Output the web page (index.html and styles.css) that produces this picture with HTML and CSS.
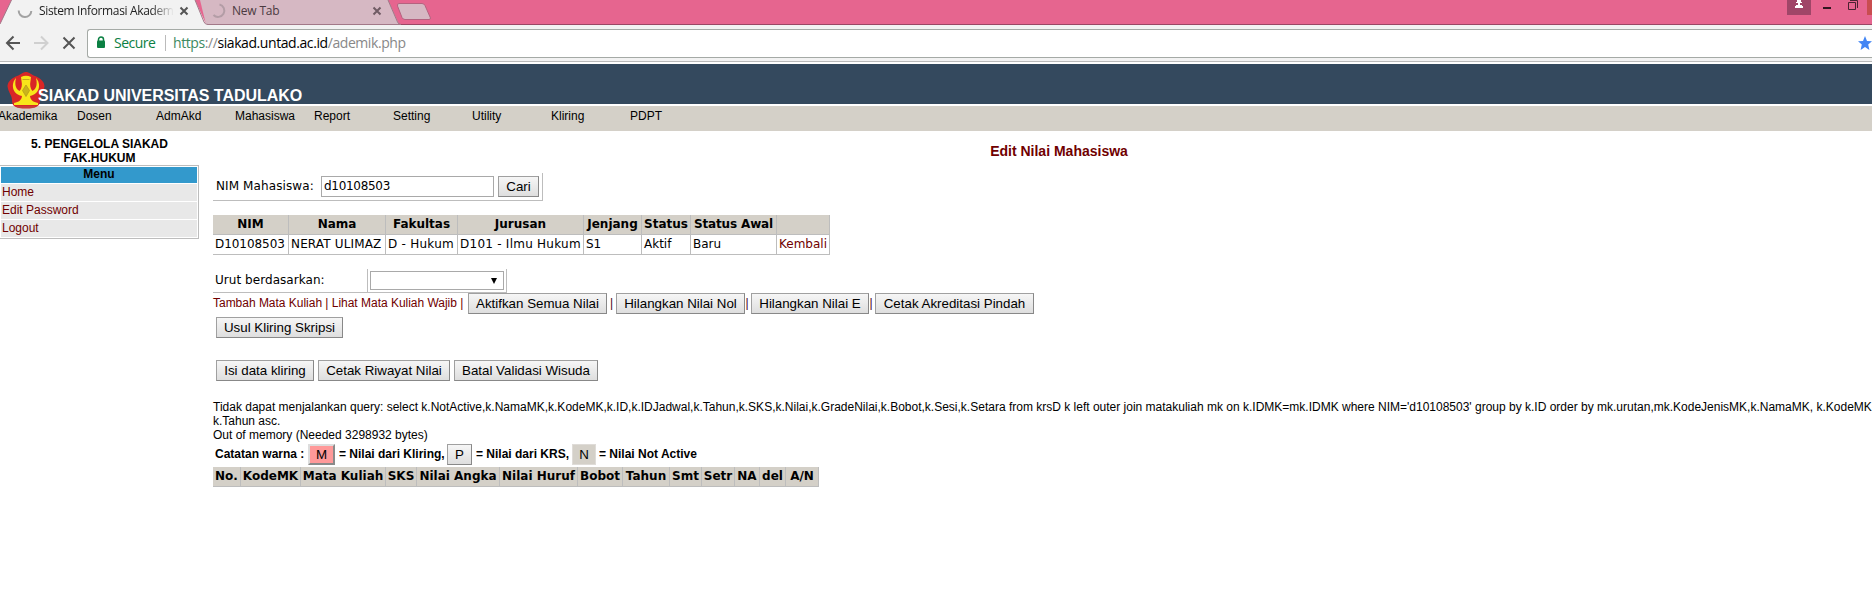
FILE: index.html
```html
<!DOCTYPE html>
<html lang="id">
<head>
<meta charset="utf-8">
<title>Sistem Informasi Akademik</title>
<link rel="stylesheet" href="styles.css">
</head>
<body>
<div class="tabstrip">
  <svg class="tabshapes" width="1872" height="25" viewBox="0 0 1872 25">
    <rect width="1872" height="25" fill="#e6658f"/>
    <path d="M0 24.5H1872" stroke="#9a4664"/>
    <path d="M200 0H388L399 24.5H206Z" fill="#d6b8c3"/>
    <path d="M388 0L397.5 22Q398.500 24.500 401 24.500M206 24.500H401" fill="none" stroke="#a27888"/>
    <path d="M0 25V24L11.500 0H195L205.500 23L208 25Z" fill="#f2f2f2"/>
    <path d="M0 24L11.500 0M195 0L204 22Q205 24.500 208 24.500" fill="none" stroke="#a27888"/>
    <path d="M399 3.500H422Q424 3.500 425 5.500L430.500 18Q430.500 19.500 429 19.500H405Q403 19.500 402 17.500L397.500 6Q397 3.500 399 3.500Z" fill="#d6b8c3" stroke="#b5627f"/>
    <path d="M18.700 10.500A6.300 6.300 0 0 0 31.300 11" fill="none" stroke="#a2a2a2" stroke-width="2"/>
    <path d="M219.500 4.500A6.300 6.300 0 1 1 213.500 15" fill="none" stroke="#b39da6" stroke-width="2"/>
    <path d="M180.500 7.500l7 7m0-7l-7 7" stroke="#555" stroke-width="2"/>
    <path d="M373.500 7.500l7 7m0-7l-7 7" stroke="#705b64" stroke-width="2"/>
    <rect x="1787" width="24" height="15" fill="#a04668"/>
    <path d="M1797 0h4v2h1v1h-2v2h2v1h1v2h-8V6h1V5h2V3h-2V2h1z" fill="#fff"/>
    <rect x="1823" y="7" width="8" height="2" fill="#321721"/>
    <path d="M1848.500 2.500h7v7h-7zM1850 .500h7.500V8" fill="none" stroke="#4a2230"/>
    <rect x="1867" width="5" height="15" fill="#c94d50"/>
  </svg>
  <div class="tab tab-on">Sistem Informasi Akadem</div>
  <div class="tab tab-off">New Tab</div>
</div>
<div class="toolbar">
  <svg class="nav" width="87" height="37" viewBox="0 0 87 37">
    <path d="M20 18H8M13.500 11.500L7 18l6.500 6.500" fill="none" stroke="#555" stroke-width="2"/>
    <path d="M34 18h13M41 11.500l6.500 6.500-6.500 6.500" fill="none" stroke="#d0d0d0" stroke-width="2"/>
    <path d="M63.500 12.500l11 11m0-11l-11 11" stroke="#555" stroke-width="2"/>
  </svg>
  <div class="omni">
    <svg width="10" height="13" viewBox="0 0 10 13"><path d="M2.500 5V3.500a2.500 2.500 0 0 1 5 0V5" fill="none" stroke="#0b8043" stroke-width="1.500"/><rect x="1" y="4.500" width="8" height="7.500" rx="1" fill="#0b8043"/></svg>
    <span class="secure">Secure</span>
    <span class="bar"></span>
    <span class="url"><span class="green">https</span>://<b>siakad.untad.ac.id</b>/ademik.php</span>
    <svg class="star" width="14" height="14" viewBox="0 0 14 14"><path d="M7 0l2 4.900 5 .400-3.800 3.300L11.400 14 7 11 2.600 14l1.200-5.400L0 5.300l5-.400z" fill="#4285f4"/></svg>
  </div>
</div>
<div class="header">
  <svg class="logo" width="38" height="38" viewBox="0 0 38 38">
    <path d="M19 1C22 1 24 3.500 28 5C33 7 37 10 37.500 15C37 21 33 24 33 29C33 34 31 36 26 37Q19 38 12 37C7 36 5 34 5 29C5 24 1 21 .500 15C1 10 5 7 10 5C14 3.500 16 1 19 1Z" fill="#d92626"/>
    <path d="M9 7C4 12 4.500 23 15 25C14.500 29 12 31 7 32V34H31V32C26 31 23.500 29 23 25C33.500 23 34 12 29 7C30.500 13 29.500 18 25.500 20C23.500 18 22.500 14 23.500 10L24 6Q19 3.500 14 6L14.500 10C15.500 14 14.500 18 12.500 20C8.500 18 7.500 13 9 7Z" fill="#f8e61a"/>
    <path d="M19 14l3.500 5.500-3.500 6-3.500-6z" fill="#c9b41c" stroke="#b89a18" stroke-width=".8"/>
    <path d="M15.500 8.500h7" stroke="#c9a818"/>
    <path d="M10 36h18" stroke="#b5524a"/>
  </svg>
  <span class="brand">SIAKAD UNIVERSITAS TADULAKO</span>
</div>
<div class="menu"><span>Akademika</span><span>Dosen</span><span>AdmAkd</span><span>Mahasiswa</span><span>Report</span><span>Setting</span><span>Utility</span><span>Kliring</span><span>PDPT</span></div>
<div class="page">
  <div class="side">
    <div class="who">5. PENGELOLA SIAKAD<br>FAK.HUKUM</div>
    <div class="box"><div class="boxhead">Menu</div><a>Home</a><a>Edit Password</a><a>Logout</a></div>
  </div>
  <div class="main">
    <h1>Edit Nilai Mahasiswa</h1>
    <div class="search"><span class="lbl-nim">NIM Mahasiswa:</span><div class="input">d10108503</div><div class="btn w41">Cari</div></div>
    <div class="grid student">
      <b>NIM</b><b>Nama</b><b>Fakultas</b><b>Jurusan</b><b>Jenjang</b><b>Status</b><b class="awal">Status Awal</b><b></b>
      <span class="nim">D10108503</span><span class="nama">NERAT ULIMAZ</span><span class="wide">D - Hukum</span><span class="wide">D101 - Ilmu Hukum</span><span>S1</span><span>Aktif</span><span>Baru</span><span class="red">Kembali</span>
    </div>
    <div class="sort"><span class="lbl-sort">Urut berdasarkan:</span><div class="selcell"><div class="select"><svg width="6" height="6" viewBox="0 0 6 6"><path d="M0 0h6L3 6z" fill="#000"/></svg></div></div></div>
    <div class="actions">
      <span class="links">Tambah Mata Kuliah | Lihat Mata Kuliah Wajib |</span>
      <div class="btn w139">Aktifkan Semua Nilai</div><i class="pipe p9">|</i>
      <div class="btn w129">Hilangkan Nilai Nol</div><i class="pipe p6">|</i>
      <div class="btn w118">Hilangkan Nilai E</div><i class="pipe p6">|</i>
      <div class="btn w159">Cetak Akreditasi Pindah</div>
    </div>
    <div class="row2"><div class="btn w127">Usul Kliring Skripsi</div></div>
    <div class="row3"><div class="btn w98">Isi data kliring</div><div class="btn w132">Cetak Riwayat Nilai</div><div class="btn w144">Batal Validasi Wisuda</div></div>
    <div class="error">Tidak dapat menjalankan query: select k.NotActive,k.NamaMK,k.KodeMK,k.ID,k.IDJadwal,k.Tahun,k.SKS,k.Nilai,k.GradeNilai,k.Bobot,k.Sesi,k.Setara from krsD k left outer join matakuliah mk on k.IDMK=mk.IDMK where NIM='d10108503' group by k.ID order by mk.urutan,mk.KodeJenisMK,k.NamaMK, k.KodeMK<br>k.Tahun asc.<br>Out of memory (Needed 3298932 bytes)</div>
    <div class="legend"><span class="l1">Catatan warna :</span><div class="key m">M</div><span class="l2">= Nilai dari Kliring,</span><div class="btn key">P</div><span class="l3">= Nilai dari KRS,</span><div class="key n">N</div><span class="l4">= Nilai Not Active</span></div>
    <div class="grid grades"><b>No.</b><b>KodeMK</b><b>Mata Kuliah</b><b>SKS</b><b>Nilai Angka</b><b>Nilai Huruf</b><b>Bobot</b><b>Tahun</b><b>Smt</b><b>Setr</b><b>NA</b><b>del</b><b>A/N</b></div>
  </div>
</div>
</body>
</html>
```
FILE: styles.css
```css
* { box-sizing: border-box; }
body { margin: 0; width: 1872px; height: 609px; overflow: hidden; background: #fff; color: #000; font: 12px/14px "Liberation Sans", Arial, sans-serif; white-space: nowrap; }
svg { display: block; flex: none; }

.tabstrip { position: relative; display: flex; height: 25px; font: 12px/22px "Open Sans", "Noto Sans", sans-serif; color: #222; }
.tabshapes { position: absolute; left: 0; top: 0; }
.tab { position: relative; height: 25px; }
.tab-on { width: 138px; margin-left: 39px; letter-spacing: -.36px; -webkit-mask-image: linear-gradient(90deg, #000 112px, transparent 135px); mask-image: linear-gradient(90deg, #000 112px, transparent 135px); }
.tab-off { margin-left: 55px; color: #4b3a41; letter-spacing: -.2px; }
.toolbar { display: flex; height: 39px; padding-bottom: 2px; background: linear-gradient(#f2f2f2 36px, #b9b9b9 36px, #b9b9b9 37px, #fff 37px); }
.omni { display: flex; align-items: center; flex: 1; height: 29px; margin-top: 4px; padding: 0 0 2px 8px; border: 1px solid #a5aaa6; border-right: 0; border-radius: 3px 0 0 3px; background: #fff; font: 14px/24px "Open Sans", "Noto Sans", sans-serif; }
.secure { width: 42px; margin-left: 8px; color: #0b8043; letter-spacing: -.5px; }
.bar { width: 1px; height: 16px; margin: 1px 7px 0 9px; background: #bbb; }
.url { color: #888; letter-spacing: -.42px; }
.url b { font-weight: 400; color: #000; }
.url .green { color: #3c8a5f; }
.star { margin-left: auto; }

.header { position: relative; height: 40px; background: #34495e; }
.logo { position: absolute; z-index: 1; left: 7px; top: 7px; }
.brand { position: relative; z-index: 2; display: block; padding: 23px 0 0 38px; font: bold 16px/17px "Liberation Sans", Arial, sans-serif; letter-spacing: -.04px; color: #fff; }
.menu { display: flex; height: 25px; margin-top: 2px; margin-left: -2px; padding-top: 3px; background: #d4d0c8; }
.menu span { width: 79px; }

.page { display: flex; gap: 14px; }
.side { width: 199px; flex: none; padding-top: 6px; }
.who { font-weight: bold; text-align: center; }
.box { border: solid #bdbdbd; border-width: 1px 1px 1px 0; padding: 1px 1px 0 1px; }
.boxhead { height: 16px; margin-bottom: 1px; background: #39c; font-weight: bold; text-align: center; line-height: 15px; }
.box a { display: block; height: 17px; margin-bottom: 1px; padding-left: 1px; background: #e8e8e8; color: #700000; line-height: 16px; }

.main { width: 1692px; flex: none; }
h1 { margin: 12px 0 0; font-size: 14px; line-height: 16px; text-align: center; color: #700000; }
.search { display: flex; align-items: flex-start; width: 330px; height: 28px; margin-top: 14px; padding: 3px 0 0 3px; border: solid #bdbdbd; border-width: 0 1px 1px 0; font: 12px/21px "DejaVu Sans", Verdana, sans-serif; }
.lbl-nim { width: 105px; letter-spacing: .1px; }
.input { width: 173px; height: 21px; margin-right: 4px; padding-left: 2px; border: 1px solid #a9a9a9; line-height: 18px; letter-spacing: -.3px; }
.btn { height: 21px; flex: none; border: 1px solid #a0a0a0; border-right-color: #888; border-bottom-color: #888; background: linear-gradient(#f6f6f6, #dedede); font: 13.33px/19px "Liberation Sans", Arial, sans-serif; text-align: center; }
.w41 { width: 41px; } .w139 { width: 139px; } .w129 { width: 129px; } .w118 { width: 118px; } .w159 { width: 159px; }
.w127 { width: 127px; } .w98 { width: 98px; } .w132 { width: 132px; } .w144 { width: 144px; }

.grid { display: grid; font: 12px/18px "DejaVu Sans", Verdana, sans-serif; }
.grid > * { height: 20px; border: solid #bdbdbd; border-width: 0 1px 1px 0; }
.grid b { background: #d4d0c8; text-align: center; }
.grid span { padding-left: 2px; }
.grid .nim { letter-spacing: -.05px; }
.grid .nama { letter-spacing: .15px; }
.grid .wide { letter-spacing: .25px; }
.grid .awal { letter-spacing: -.15px; }
.student { width: 617px; margin-top: 14px; grid-template-columns: 76px 97px 72px 126px 58px 49px 86px 53px; }
.red { color: #700000; }
.sort { display: flex; width: 294px; height: 24px; margin-top: 14px; border: solid #bdbdbd; border-width: 0 1px 1px 0; font: 12px/23px "DejaVu Sans", Verdana, sans-serif; }
.lbl-sort { width: 154px; padding-left: 2px; letter-spacing: .05px; }
.selcell { border-left: 1px solid #bdbdbd; padding: 2px 0 0 2px; }
.select { display: flex; justify-content: flex-end; align-items: center; width: 134px; height: 19px; padding-right: 6px; border: 1px solid #a9a9a9; }
.actions { display: flex; height: 21px; color: #700000; }
.actions .btn { color: #000; }
.links { width: 255px; line-height: 21px; letter-spacing: -.02px; }
.pipe { font-style: normal; line-height: 21px; text-align: center; color: #402; }
.p9 { width: 9px; } .p6 { width: 6px; }
.pipe.p6 { text-indent: -2px; }
.row2 { display: flex; margin: 3px 0 0 3px; }
.row3 { display: flex; gap: 4px; margin: 22px 0 0 3px; }
.error { margin-top: 19px; }
.legend { display: flex; height: 23px; margin-top: 2px; font-weight: bold; line-height: 21px; }
.l1 { width: 93px; margin-left: 2px; }
.l2 { width: 108px; margin-left: 4px; }
.l3 { width: 96px; margin-left: 4px; }
.l4 { margin-left: 3px; }
.key { width: 25px; height: 21px; font: 13.33px/19px "Liberation Sans", Arial, sans-serif; text-align: center; }
.m { width: 27px; border: 2px solid; border-color: #ddd #8a8a8a #8a8a8a #ddd; background: #f99; line-height: 17px; }
.n { width: 24px; border: 1px solid #dfdcd8; background: #d4d0c8; }
.grades { width: 606px; grid-template-columns: 28px 60px 85px 31px 83px 78px 45px 47px 32px 33px 25px 26px 33px; }
```
